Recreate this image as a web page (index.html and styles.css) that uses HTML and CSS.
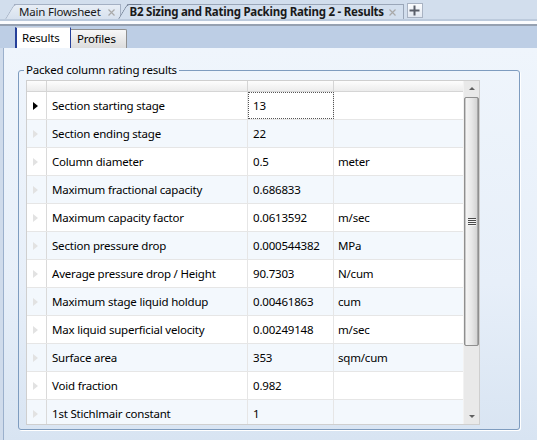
FILE: index.html
```html
<!DOCTYPE html>
<html>
<head>
<meta charset="utf-8">
<link rel="stylesheet" href="styles.css">
</head>
<body>
<div class="app">
  <div class="doc-strip">
    <div class="dtab">
      <span class="dtab-label">Main Flowsheet</span>
      <svg class="close" width="7" height="7" viewBox="0 0 7 7"><path d="M0.5 0.5L6.5 6.5M6.5 0.5L0.5 6.5" stroke="#a9a9a9" stroke-width="1.2"/></svg>
    </div>
    <div class="dtab active">
      <span class="dtab-label">B2 Sizing and Rating Packing Rating 2 - Results</span>
      <svg class="close" width="7" height="7" viewBox="0 0 7 7"><path d="M0.5 0.5L6.5 6.5M6.5 0.5L0.5 6.5" stroke="#a9a9a9" stroke-width="1.2"/></svg>
    </div>
    <div class="plus">
      <svg width="11" height="11" viewBox="0 0 11 11"><path d="M5.5 0.5V10.5M0.5 5.5H10.5" stroke="#5a5f6a" stroke-width="2"/></svg>
    </div>
  </div>
  <div class="strip-sep"></div>
  <div class="view-tabs">
    <div class="vtab active">Results</div>
    <div class="vtab">Profiles</div>
  </div>
  <div class="panel">
    <fieldset class="group">
      <legend>Packed column rating results</legend>
      <div class="grid">
        <div class="table">
          <div class="row head">
            <div class="cell rh"></div><div class="cell"></div><div class="cell"></div><div class="cell"></div>
          </div>
          <div class="body">
            <div class="row"><div class="cell rh"><span class="tri cur"></span></div><div class="cell">Section starting stage</div><div class="cell focus">13</div><div class="cell"></div></div>
            <div class="row alt"><div class="cell rh"><span class="tri"></span></div><div class="cell">Section ending stage</div><div class="cell">22</div><div class="cell"></div></div>
            <div class="row"><div class="cell rh"><span class="tri"></span></div><div class="cell">Column diameter</div><div class="cell">0.5</div><div class="cell">meter</div></div>
            <div class="row alt"><div class="cell rh"><span class="tri"></span></div><div class="cell">Maximum fractional capacity</div><div class="cell">0.686833</div><div class="cell"></div></div>
            <div class="row"><div class="cell rh"><span class="tri"></span></div><div class="cell">Maximum capacity factor</div><div class="cell">0.0613592</div><div class="cell">m/sec</div></div>
            <div class="row alt"><div class="cell rh"><span class="tri"></span></div><div class="cell">Section pressure drop</div><div class="cell">0.000544382</div><div class="cell">MPa</div></div>
            <div class="row"><div class="cell rh"><span class="tri"></span></div><div class="cell">Average pressure drop / Height</div><div class="cell">90.7303</div><div class="cell">N/cum</div></div>
            <div class="row alt"><div class="cell rh"><span class="tri"></span></div><div class="cell">Maximum stage liquid holdup</div><div class="cell">0.00461863</div><div class="cell">cum</div></div>
            <div class="row"><div class="cell rh"><span class="tri"></span></div><div class="cell">Max liquid superficial velocity</div><div class="cell">0.00249148</div><div class="cell">m/sec</div></div>
            <div class="row alt"><div class="cell rh"><span class="tri"></span></div><div class="cell">Surface area</div><div class="cell">353</div><div class="cell">sqm/cum</div></div>
            <div class="row"><div class="cell rh"><span class="tri"></span></div><div class="cell">Void fraction</div><div class="cell">0.982</div><div class="cell"></div></div>
            <div class="row alt"><div class="cell rh"><span class="tri"></span></div><div class="cell">1st Stichlmair constant</div><div class="cell">1</div><div class="cell"></div></div>
          </div>
        </div>
        <div class="vscroll">
          <div class="arrow up"></div>
          <div class="track">
            <div class="thumb"><span class="grip"></span></div>
          </div>
          <div class="arrow down"></div>
        </div>
      </div>
    </fieldset>
  </div>
</div>
</body>
</html>
```
FILE: styles.css
```css
* { box-sizing: border-box; }
html, body { margin: 0; padding: 0; }
body {
  width: 537px;
  height: 440px;
  overflow: hidden;
  background: #cfdbeb;
  font-family: "Noto Sans", "Open Sans", sans-serif;
  font-size: 11.5px;
  letter-spacing: -0.2px;
  color: #000;
}
.app { width: 537px; height: 440px; display: flex; flex-direction: column; }

/* document tabs */
.doc-strip {
  height: 19px;
  background: #d2deed;
  display: flex;
  align-items: flex-end;
  padding-left: 14px;
}
.dtab {
  position: relative;
  z-index: 0;
  height: 15px;
  display: flex;
  align-items: center;
  gap: 7px;
  padding: 0 5px 0 5px;
  border-top: 1px solid #a4b0c3;
  border-right: 1px solid #a4b0c3;
  background: linear-gradient(#e8eef6, #d7e1ee);
  color: #1a1a1a;
  line-height: 14px;
}
.dtab::before {
  content: "";
  position: absolute;
  z-index: -1;
  top: -1px;
  bottom: 0;
  left: -9px;
  width: 14px;
  border-left: 1px solid #a4b0c3;
  border-top: 1px solid #a4b0c3;
  border-top-left-radius: 3px;
  background: linear-gradient(#e8eef6, #d7e1ee);
  transform: skewX(-31deg);
  transform-origin: bottom left;
}
.dtab.active {
  z-index: 1;
  margin-left: 6px;
  font-weight: bold;
  letter-spacing: -0.25px;
  background: #d3dfee;
  padding-left: 3px;
  padding-right: 7px;
  gap: 5px;
  border-color: #9aa6b8;
}
.dtab.active::before { background: #d3dfee; border-color: #6f7c90; }
.close { display: block; }
.plus {
  margin-left: 3px;
  margin-bottom: 1px;
  width: 16px;
  height: 15px;
  border: 1px solid #a9b3c3;
  background: linear-gradient(#fbfcfe, #e3e9f2);
  display: flex;
  align-items: center;
  justify-content: center;
}
.plus svg { display: block; }
.strip-sep {
  height: 7px;
  background: linear-gradient(#bccadc 0 2px, #fbfcfe 2px 5px, #96a1b1 5px 7px);
}

/* view tabs */
.view-tabs {
  height: 22px;
  background: #bdcee5;
  display: flex;
  align-items: flex-end;
  padding-left: 15px;
}
.vtab {
  height: 19px;
  width: 56px;
  padding: 0 0 0 6px;
  border-top: 1px solid #8f8f8f;
  border-right: 1px solid #8f8f8f;
  background: linear-gradient(#f7f7f7, #dcdcdc);
  line-height: 18px;
  border-top-right-radius: 2px;
}
.vtab.active {
  height: 21px;
  padding: 0 0 0 5px;
  border-top: 1px solid #d4d9e2;
  border-left: 2px solid #26409a;
  border-right: 1px solid #26409a;
  background: #fff;
  line-height: 20px;
  border-radius: 0;
  width: 56px;
}

/* panel */
.panel {
  flex: 1;
  margin-left: 3px;
  border-left: 1px solid #9bb0cc;
  background: linear-gradient(#eff5fc, #e7eff9 60%, #d8e4f2);
  padding: 14px 0 0 14px;
}
.group {
  margin: 0;
  width: 502px;
  border: 1px solid #7e9cbf;
  border-radius: 3px;
  padding: 2px 38px 4px 7px;
  box-shadow: 1px 1px 0 #fff;
}
.group legend {
  padding: 0 2px;
  margin-left: -2px;
  line-height: 16px;
}

/* grid */
.grid {
  display: flex;
  width: 454px;
  height: 345px;
  border: 1px solid #cfcfcf;
  background: #fff;
}
.table { width: 436px; display: flex; flex-direction: column; }
.row {
  display: grid;
  grid-template-columns: 20px 201px 86px 129px;
  height: 28px;
  border-bottom: 1px solid #e6e6e6;
  background: #fff;
  flex: none;
}
.row.alt { background: #f3f8fd; }
.row.head {
  height: 11px;
  border-bottom: 1px solid #d5d5d5;
  background: linear-gradient(#fdfdfd, #ececec);
}
.body { flex: 1; overflow: hidden; }
.cell {
  border-right: 1px solid #e6e6e6;
  padding-left: 5px;
  line-height: 27px;
  white-space: nowrap;
  overflow: hidden;
}
.row.head .cell { border-right-color: #d5d5d5; }
.cell:last-child { border-right: none; padding-left: 4px; }
.cell.rh {
  border-right-color: #dadada;
  padding-left: 0;
  display: flex;
  align-items: center;
  justify-content: center;
}
.cell.focus { outline: 1px dotted #555; outline-offset: -1px; }
.tri {
  width: 0;
  height: 0;
  border-left: 5px solid #e2e2e2;
  border-top: 4px solid transparent;
  border-bottom: 4px solid transparent;
  margin-left: -2px;
}
.tri.cur { border-left-color: #000; }

/* scrollbar */
.vscroll {
  width: 17px;
  background: #e9e9e9;
  border-left: 1px solid #f2f2f2;
  display: flex;
  flex-direction: column;
  align-items: center;
}
.arrow { height: 15px; width: 100%; display: flex; align-items: center; justify-content: center; flex: none; }
.arrow::after {
  content: "";
  width: 0; height: 0;
  border-left: 3px solid transparent;
  border-right: 3px solid transparent;
}
.arrow.up::after { border-bottom: 3px solid #606060; }
.arrow.down::after { border-top: 3px solid #606060; }
.track { flex: 1; width: 100%; padding-top: 1px; }
.thumb {
  width: 15px;
  height: 249px;
  border: 1px solid #8f8f8f;
  border-radius: 2px;
  background: linear-gradient(90deg, #c9c9c9 0 1px, #f4f4f4 1px, #e8e8e8 50%, #d4d4d4 calc(100% - 1px), #a8a8a8 calc(100% - 1px));
  display: flex;
  align-items: center;
  justify-content: center;
}
.grip {
  width: 8px;
  height: 8px;
  background: repeating-linear-gradient(#4a4a4a 0 1px, #f4f4f4 1px 2px);
}
```
